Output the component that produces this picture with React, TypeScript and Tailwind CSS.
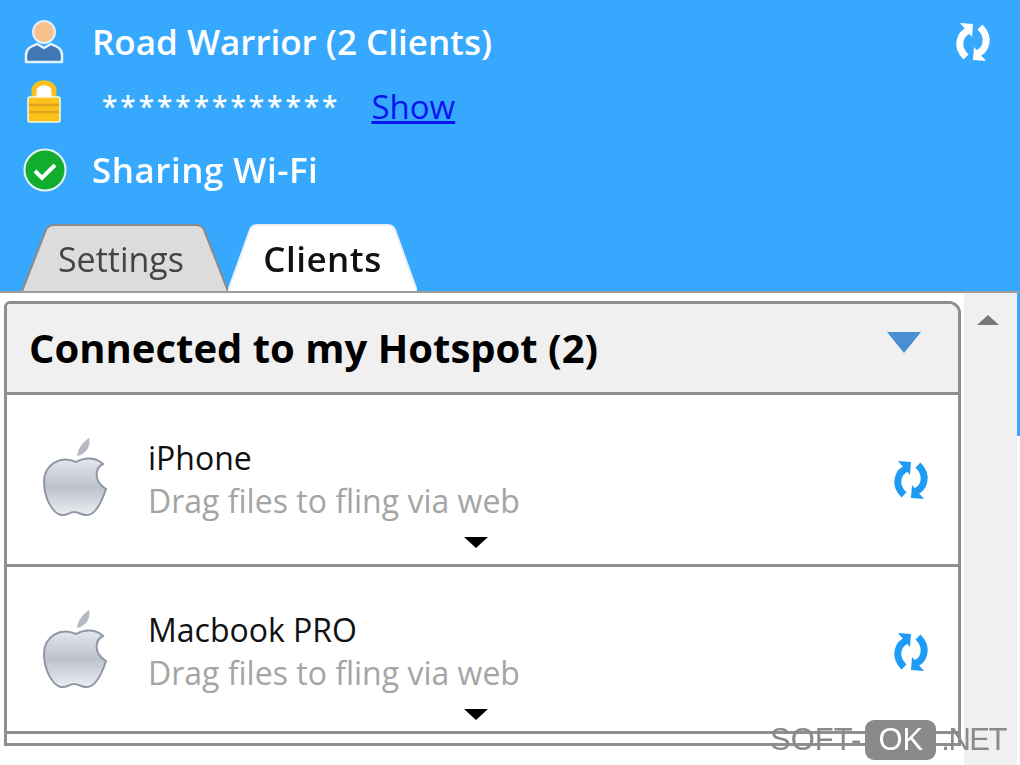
const font = { fontFamily: '"Open Sans", "Noto Sans", sans-serif' };

function SyncIcon({ color, className }: { color: string; className: string }) {
  return (
    <svg viewBox="0 0 38 40" className={className} fill="none">
      <path d="M16 8 C6 11 1 24 12 35" stroke={color} strokeWidth="7" />
      <path d="M22 32 C32 29 37 16 26 5" stroke={color} strokeWidth="7" />
      <path d="M6 1 L19 2 L18 15 Z" fill={color} />
      <path d="M32 39 L19 38 L20 25 Z" fill={color} />
    </svg>
  );
}

function UserIcon() {
  return (
    <svg viewBox="0 0 42 46" className="w-[42px] h-[46px]">
      <circle cx="21" cy="13" r="11" fill="#f8c18c" stroke="#dff0ff" strokeWidth="2" />
      <path d="M3 43 L3 36 C3 29 9 27 14 25 L21 29 L28 25 C33 27 39 29 39 36 L39 43 Z" fill="#3f78b5" stroke="#e4f2ff" strokeWidth="2.5" strokeLinejoin="round" />
    </svg>
  );
}

function LockIcon() {
  return (
    <svg viewBox="0 0 36 44" className="w-[36px] h-[44px]">
      <path d="M8 20 L8 12 C8 1 28 1 28 12 L28 20" fill="#fff" stroke="#fbc21c" strokeWidth="5" />
      <rect x="2" y="18" width="32" height="25" rx="2" fill="#fbc21c" stroke="#f2f7e8" strokeWidth="1.5" />
      <path d="M3 26 H33 M3 33 H33" stroke="#e5a41e" strokeWidth="2.5" />
    </svg>
  );
}

function CheckIcon() {
  return (
    <svg viewBox="0 0 44 44" className="w-[44px] h-[44px]">
      <circle cx="22" cy="22" r="20.5" fill="#10ad2f" stroke="#e6f5f0" strokeWidth="2" />
      <path d="M12 23 L19 30 L32 17" fill="none" stroke="#fff" strokeWidth="4" />
    </svg>
  );
}

function AppleIcon() {
  return (
    <svg viewBox="0 0 66 82" className="w-[66px] h-[84px] shrink-0">
      <defs>
        <linearGradient id="apple" x1="0" y1="0" x2="0" y2="1">
          <stop offset="0" stopColor="#e4e8ef" />
          <stop offset="0.5" stopColor="#bcc2cc" />
          <stop offset="1" stopColor="#eceef2" />
        </linearGradient>
      </defs>
      <path d="M34 19 C35 11 40 5 46 1 C48 8 44 17 34 19 Z" fill="#b4b9c2" />
      <path d="M33 25 C42 20 53 20 60 27 C52 31 50 44 63 52 C59 64 52 79 43 78 C38 78 36 75 31 75 C26 75 24 79 18 78 C9 76 1 60 1 45 C1 27 18 18 33 25 Z" fill="url(#apple)" stroke="#8f97a5" strokeWidth="2" />
    </svg>
  );
}

function ClientRow({ name, height }: { name: string; height: string }) {
  return (
    <div className={`relative flex items-start border-b-[3px] border-[#8f8f8f] bg-white pl-[36px] pr-[28px] ${height}`}>
      <div className="mt-[41px]"><AppleIcon /></div>
      <div className="ml-[39px] mt-[41px] flex-1">
        <div className="text-[32px] leading-[44px] text-[#111]">{name}</div>
        <div className="text-[32px] leading-[42px] text-[#a5a5a5]">Drag files to fling via web</div>
      </div>
      <SyncIcon color="#1e9bf5" className="mt-[65px] w-[38px] h-[40px]" />
      <div className="absolute left-[457px] top-[142px] w-0 h-0 border-x-[12px] border-x-transparent border-t-[11px] border-t-black" />
    </div>
  );
}

function Tab({ label, active }: { label: string; active?: boolean }) {
  return (
    <div className={`relative h-[67px] flex items-center justify-center ${active ? 'w-[189px]' : 'w-[206px] pr-[8px]'}`}>
      <svg viewBox="0 0 190 67" preserveAspectRatio="none" className="absolute inset-0 w-full h-full">
        <path
          d="M0 67 L22 6 Q24 1 30 1 L160 1 Q166 1 168 6 L190 67"
          fill={active ? '#fff' : '#dcdcdc'}
          stroke={active ? '#e8eef3' : '#8a8a8a'}
          strokeWidth="2"
        />
      </svg>
      <span className={`relative leading-none pt-[2px] ${active ? 'text-[35px] font-semibold tracking-[0.5px] text-[#111]' : 'text-[34px] text-[#444]'}`}>{label}</span>
    </div>
  );
}

export default function App() {
  return (
    <div className="relative w-[1020px] h-[765px] overflow-hidden bg-white" style={font}>
      <div className="blur-[0.5px]">
        <div className="h-[293px] bg-[#36a9ff] border-b-2 border-[#9c9c9c] flex flex-col">
          <div className="flex items-center h-[84px] pl-[23px] pr-[28px]">
            <div className="w-[42px] flex justify-center"><UserIcon /></div>
            <span className="ml-[27px] flex-1 text-[35px] font-semibold text-white">Road Warrior (2 Clients)</span>
            <SyncIcon color="#ffffff" className="w-[38px] h-[40px]" />
          </div>
          <div className="flex items-center h-[44px] pl-[26px]">
            <div className="w-[36px] flex justify-center -mt-[10px]"><LockIcon /></div>
            <span className="ml-[40px] text-[28px] font-semibold text-white tracking-[3px] leading-none">*************</span>
            <a className="ml-[31px] text-[33px] leading-none text-[#0a14f0] underline">Show</a>
          </div>
          <div className="flex items-center h-[44px] mt-[20px] pl-[23px]">
            <CheckIcon />
            <span className="ml-[25px] text-[35px] font-semibold tracking-[0.5px] text-white">Sharing Wi-Fi</span>
          </div>
          <div className="flex items-end mt-auto pl-[22px]">
            <Tab label="Settings" />
            <Tab label="Clients" active />
          </div>
        </div>

        <div className="flex h-[472px]">
          <div className="ml-[4px] mt-[8px] w-[957px] h-[445px] border-[3px] border-[#8f8f8f] rounded-tr-[12px] rounded-tl-[6px] flex flex-col shrink-0 overflow-hidden">
            <div className="flex items-center justify-between h-[91px] shrink-0 bg-[#f0f0f0] border-b-[3px] border-[#8f8f8f] pl-[22px] pr-[37px]">
              <span className="text-[40px] font-bold text-black">Connected to my Hotspot (2)</span>
              <div className="mb-[12px] w-0 h-0 border-x-[17px] border-x-transparent border-t-[21px] border-t-[#4a8ed4]" />
            </div>
            <ClientRow name="iPhone" height="h-[172px] shrink-0" />
            <ClientRow name="Macbook PRO" height="h-[167px] shrink-0" />
          </div>
          <div className="ml-[3px] w-[53px] bg-[#f0f0f0] flex justify-center pt-[22px] pr-[6px]">
            <div className="w-0 h-0 border-x-[11px] border-x-transparent border-b-[10px] border-b-[#777]" />
          </div>
          <div className="w-[3px] h-[143px] bg-[#36a9ff]" />
        </div>
      </div>

      <div className="absolute left-[770px] top-[720px] flex items-center text-[31px] leading-[40px] text-[#8a8a8a]" style={{ fontFamily: '"Liberation Sans", sans-serif' }}>
        <span>SOFT-</span>
        <span className="ml-[4px] w-[71px] h-[40px] bg-[#8a8a8a] text-white rounded-[9px] flex items-center justify-center">OK</span>
        <span className="ml-[5px] tracking-[-1.5px]">.NET</span>
      </div>
    </div>
  );
}
